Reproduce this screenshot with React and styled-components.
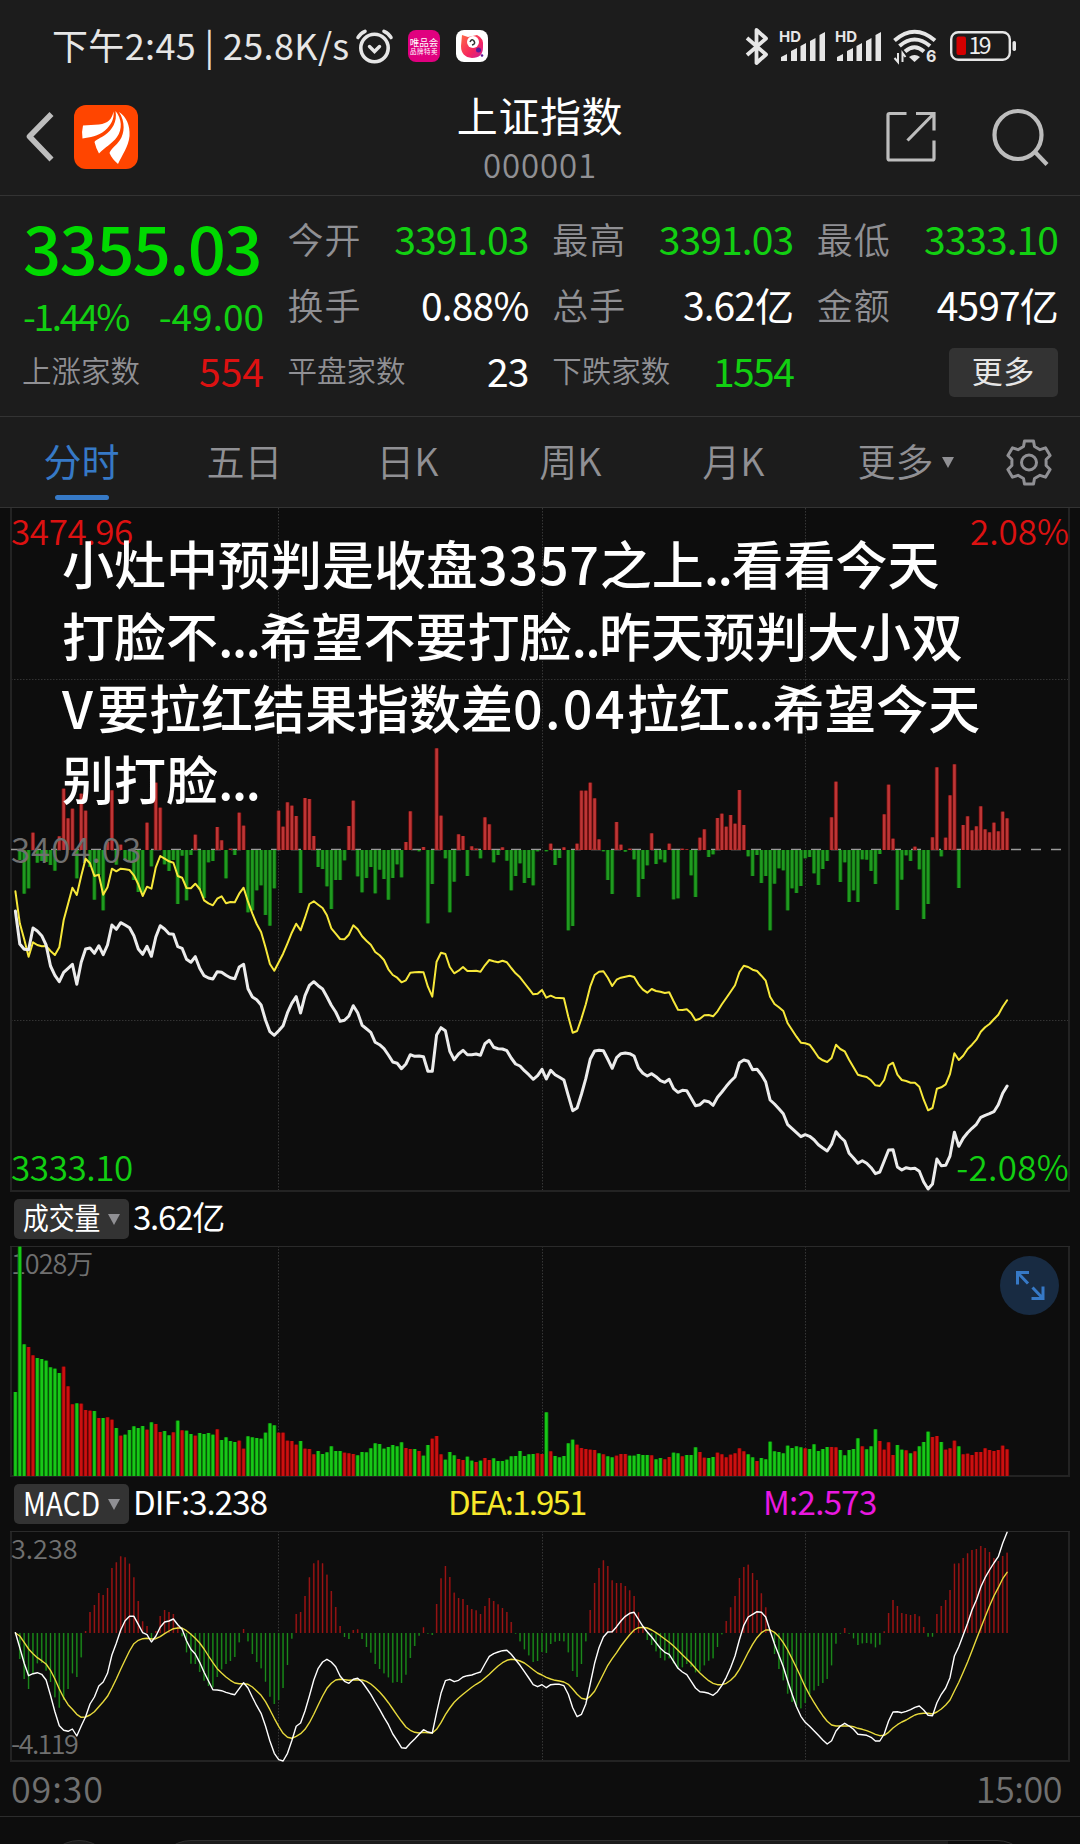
import React from "react";
import styled, { createGlobalStyle } from "styled-components";

const RED = "#dc1111";
const GREEN = "#12cf12";
const GREY = "#909094";
const DIM = "#707070";
const BLUE = "#3679c6";

// one sample per minute, 09:30 - 14:45
const STEP = 4.388;
const FIRST_X = 15.4;

const strength = [
  0, -30, -131, -115, 52, -38, -33, -36, -45, -62, 41, 184, 95, 124, -85, 169, 118, -51, -149, -75,
  -181, 24, 179, -44, 16, -30, -36, -90, -126, -129, 82, -49, 202, 127, -43, -63, -30, -162, -17, -151,
  -15, 46, -119, -144, -37, -33, 69, 29, -85, 4, -15, 112, 73, -187, -181, -121, -106, -195, -227, -115,
  118, 70, 143, 133, 102, -129, 156, 153, 42, -51, -57, -109, -177, -90, -90, -31, 72, 148, -79, -127,
  -84, -51, -130, -59, -87, -149, -84, -43, -82, 24, 116, 0, -4, 9, -220, -102, 305, 103, -25, -187,
  -95, 47, 42, -78, 11, 4, -25, 98, 77, -37, -15, 8, -32, -121, -78, -40, -99, -84, -106, -4,
  0, -4, 19, -45, -24, 8, -241, -228, 19, 178, 178, 202, 155, 32, -4, -90, -132, 84, 16, -5,
  4, -28, -141, -87, -46, 50, -42, -28, -37, 19, -148, -145, 4, 2, -76, -141, 37, 62, -21, -13,
  96, 109, 70, 105, 79, 180, 75, -19, -78, -15, -99, -78, -241, -101, -55, -61, -181, -115, -129, -108,
  -25, -21, -70, -105, -57, -33, 98, 205, -96, -37, -156, -121, -156, -28, -29, -63, -102, -12, 107, 196,
  34, -180, -89, -16, -33, 10, -58, -207, -162, 38, 248, -19, 37, 164, 257, -114, 75, 101, 59, 71,
  131, 62, 53, 82, 56, 115, 95,
];

const price = [
  543, 642, 658, 659, 594, 603, 617, 645, 708, 736, 755, 727, 715, 703, 763, 697, 657, 654, 670, 647,
  674, 645, 585, 598, 578, 585, 593, 617, 657, 673, 649, 679, 621, 587, 597, 611, 613, 650, 655, 688,
  697, 680, 715, 737, 744, 747, 725, 727, 736, 743, 746, 711, 703, 776, 801, 809, 825, 870, 905, 916,
  902, 887, 848, 820, 800, 849, 797, 766, 755, 767, 777, 800, 826, 846, 874, 871, 858, 827, 848, 886,
  896, 907, 937, 944, 956, 975, 996, 1000, 1016, 1002, 974, 979, 978, 980, 1024, 1024, 915, 893, 902, 964,
  989, 972, 961, 974, 974, 972, 976, 941, 931, 952, 956, 957, 962, 984, 1002, 1008, 1022, 1034, 1048, 1037,
  1018, 1047, 1021, 1034, 1042, 1050, 1097, 1142, 1134, 1092, 1046, 988, 963, 961, 962, 988, 1015, 983, 971, 969,
  971, 978, 1014, 1030, 1038, 1031, 1040, 1052, 1057, 1048, 1076, 1087, 1081, 1082, 1105, 1127, 1124, 1112, 1115, 1126,
  1102, 1086, 1069, 1054, 1041, 998, 990, 994, 1019, 1018, 1034, 1056, 1110, 1122, 1136, 1151, 1184, 1196, 1208, 1220,
  1214, 1219, 1229, 1244, 1254, 1263, 1243, 1205, 1221, 1233, 1270, 1284, 1300, 1292, 1300, 1313, 1331, 1326, 1293, 1260,
  1259, 1311, 1320, 1313, 1316, 1315, 1324, 1356, 1377, 1362, 1287, 1307, 1306, 1278, 1207, 1249, 1225, 1208, 1195, 1183,
  1162, 1156, 1151, 1145, 1124, 1090, 1068,
];

const average = [
  484, 580, 628, 680, 637, 645, 649, 648, 663, 675, 652, 570, 521, 473, 495, 438, 386, 400, 438, 434,
  494, 472, 416, 424, 416, 418, 420, 436, 463, 498, 470, 476, 412, 378, 386, 394, 398, 438, 443, 474,
  475, 461, 477, 511, 520, 526, 506, 499, 520, 516, 517, 491, 473, 515, 551, 582, 606, 652, 702, 722,
  697, 671, 640, 608, 581, 601, 563, 522, 514, 524, 534, 556, 595, 611, 627, 628, 614, 586, 598, 619,
  632, 644, 666, 676, 690, 718, 735, 743, 757, 751, 728, 727, 726, 727, 770, 800, 695, 668, 672, 711,
  730, 722, 711, 723, 723, 722, 725, 706, 690, 694, 697, 692, 697, 714, 730, 742, 759, 776, 793, 791,
  780, 803, 797, 803, 804, 805, 860, 908, 903, 865, 823, 770, 735, 725, 724, 743, 768, 749, 743, 740,
  737, 741, 763, 779, 788, 777, 783, 785, 789, 787, 814, 839, 840, 838, 850, 871, 866, 856, 855, 859,
  844, 823, 804, 785, 766, 727, 707, 711, 719, 723, 737, 752, 800, 822, 832, 843, 880, 900, 920, 938,
  940, 944, 962, 982, 991, 996, 984, 944, 957, 964, 989, 1012, 1034, 1038, 1041, 1051, 1066, 1068, 1050, 1006,
  998, 1034, 1050, 1053, 1058, 1058, 1070, 1109, 1141, 1134, 1076, 1072, 1063, 1032, 970, 990, 977, 957, 944, 929,
  905, 892, 882, 868, 854, 830, 811,
];

// sign carries the direction of the minute, not of the bar
const volume = [
  -252, -688, -395, 387, 362, -354, -351, -346, -326, -322, -309, 328, 269, 215, -218, 217, 198, 196, -195, 174,
  -174, 176, 169, -144, 121, -124, -138, -149, -144, -150, 139, -161, 156, 132, -135, -122, 131, -166, 137, -136,
  -126, 121, -129, -126, -129, -124, 140, -108, -116, -105, -102, 106, 82, -119, -116, -114, -112, -130, -158, -152,
  130, 130, 106, 105, 94, -105, 82, 81, 65, -75, -66, -71, -89, -75, -75, 70, 68, 66, -62, -72,
  -71, -83, -98, -96, -82, -87, -93, -89, -101, 84, 81, -81, 75, -61, -93, 112, 120, 65, -49, -72,
  -62, 51, 48, -58, -46, 42, -46, 54, 48, -53, -45, -45, -49, -59, -60, -75, -60, -65, -66, 68,
  66, -191, 74, -60, -56, -60, -98, -109, 94, 84, 81, 79, 78, -68, 65, -59, -56, 61, 66, 66,
  -61, -61, -66, -63, -63, 62, -50, -54, 50, 57, -70, -68, 59, -63, -63, -86, 72, 55, -54, -57,
  70, 65, 56, 64, 68, 83, 74, -65, -56, 45, -54, -50, -103, -74, -72, -68, -91, -84, -89, -86,
  83, -81, -95, -75, -81, -87, 87, 86, -78, -62, -78, -81, -113, 89, -80, -89, -140, 105, 79, 101,
  63, -93, -79, 77, -68, 74, -89, -102, -133, 117, 120, -102, 79, 83, 106, -89, 65, 67, 63, 72,
  72, 83, 78, 75, 78, 91, 80,
];

const macd = [
  0, -78, -138, -168, -121, -91, -90, -113, -147, -193, -224, -201, -168, -121, -132, -73, 6, 63, 84, 120,
  114, 135, 195, 212, 230, 227, 208, 167, 96, 35, 21, -18, 6, 51, 69, 63, 57, 20, -10, -58,
  -92, -93, -117, -143, -159, -163, -132, -109, -93, -84, -72, -28, 12, -25, -63, -87, -106, -146, -191, -213,
  -201, -165, -96, -17, 57, 63, 111, 167, 209, 218, 209, 175, 126, 78, 21, -12, -18, 9, 11, -18,
  -42, -59, -93, -108, -121, -133, -149, -147, -150, -125, -75, -39, -8, 17, -2, -6, 87, 164, 201, 168,
  121, 105, 102, 84, 72, 68, 57, 81, 105, 96, 86, 75, 63, 33, -2, -25, -49, -67, -87, -84,
  -57, -60, -33, -26, -24, -25, -58, -114, -132, -93, -25, 69, 150, 195, 218, 201, 158, 150, 150, 141,
  128, 111, 62, 19, -21, -36, -55, -75, -82, -76, -91, -107, -103, -93, -101, -118, -115, -97, -83, -76,
  -42, -4, 36, 77, 111, 165, 198, 205, 180, 159, 119, 77, 12, -63, -108, -142, -182, -207, -222, -226,
  -210, -191, -172, -159, -150, -138, -97, -32, -2, 15, -2, -16, -36, -31, -30, -32, -43, -35, 5, 60,
  99, 81, 60, 57, 54, 57, 50, 18, -11, -11, 57, 81, 99, 129, 208, 209, 225, 239, 249, 252,
  261, 255, 243, 225, 216, 231, 241,
];

const dif = [
  458, 503, 550, 587, 581, 578, 583, 600, 646, 695, 737, 751, 754, 747, 768, 738, 710, 672, 651, 618,
  606, 580, 525, 490, 450, 422, 409, 409, 433, 458, 464, 486, 469, 442, 426, 423, 417, 434, 448, 482,
  508, 522, 547, 577, 603, 629, 630, 632, 637, 641, 644, 626, 608, 624, 652, 677, 700, 738, 783, 820,
  839, 843, 820, 782, 739, 729, 693, 648, 600, 565, 546, 538, 546, 560, 588, 604, 610, 598, 595, 606,
  624, 643, 666, 688, 712, 734, 762, 782, 803, 805, 790, 777, 763, 749, 756, 759, 698, 640, 602, 598,
  605, 601, 591, 587, 585, 580, 576, 552, 529, 521, 516, 512, 511, 523, 539, 556, 575, 594, 614, 620,
  614, 623, 614, 613, 613, 617, 643, 683, 710, 703, 672, 612, 550, 503, 471, 456, 455, 440, 423, 409,
  400, 397, 418, 439, 456, 471, 488, 505, 517, 523, 544, 565, 576, 584, 604, 624, 635, 637, 640, 646,
  635, 616, 592, 563, 528, 479, 436, 411, 403, 395, 397, 411, 452, 492, 526, 560, 603, 643, 680, 709,
  727, 739, 752, 766, 780, 792, 782, 753, 738, 730, 738, 748, 763, 764, 766, 772, 783, 783, 762, 723,
  696, 695, 698, 694, 689, 682, 678, 690, 706, 707, 668, 643, 624, 593, 528, 500, 465, 430, 390, 360,
  321, 293, 270, 249, 230, 190, 157,
];

const dea = [
  459, 468, 487, 507, 521, 533, 542, 552, 571, 597, 627, 653, 674, 688, 703, 712, 711, 705, 695, 680,
  665, 649, 624, 597, 568, 540, 513, 491, 481, 476, 475, 477, 476, 470, 461, 453, 446, 444, 444, 452,
  463, 475, 489, 507, 528, 548, 566, 579, 591, 601, 609, 611, 611, 613, 621, 633, 646, 665, 689, 715,
  739, 760, 772, 775, 769, 761, 748, 728, 703, 675, 648, 625, 610, 600, 598, 599, 601, 600, 600, 600,
  604, 612, 623, 636, 651, 668, 687, 706, 724, 741, 751, 757, 759, 757, 758, 759, 748, 728, 704, 684,
  667, 654, 643, 632, 622, 613, 605, 594, 583, 570, 558, 548, 541, 538, 539, 543, 549, 559, 569, 579,
  585, 592, 597, 601, 603, 606, 613, 627, 643, 655, 658, 649, 634, 608, 582, 556, 536, 518, 498, 481,
  464, 450, 443, 442, 444, 450, 458, 467, 477, 487, 498, 511, 524, 537, 550, 565, 579, 591, 602, 610,
  614, 614, 610, 601, 588, 568, 543, 517, 493, 473, 458, 450, 450, 457, 470, 488, 510, 536, 563, 592,
  620, 645, 667, 688, 707, 724, 735, 738, 738, 738, 738, 740, 745, 748, 752, 757, 763, 767, 766, 757,
  744, 734, 726, 720, 712, 705, 701, 700, 700, 702, 696, 687, 675, 660, 633, 607, 577, 546, 512, 478,
  444, 411, 378, 348, 323, 296, 277,
];

const GlobalStyle = createGlobalStyle`
  * {
    box-sizing: border-box;
  }
  body {
    margin: 0;
    background: #0d0d0d;
    font-family: "Noto Sans CJK SC", "Noto Sans", sans-serif;
  }
  svg {
    display: block;
    flex: none;
    overflow: visible;
  }
`;

const Page = styled.div`
  width: 1080px;
  height: 1844px;
  overflow: hidden;
  background: #0d0d0d;
  color: #fff;
`;

const Text = styled.span`
  font-size: ${({ $size }) => $size}px;
  font-weight: ${({ $weight }) => $weight || 400};
  letter-spacing: ${({ $ls }) => $ls || 0}px;
  color: ${({ $color }) => $color || "#fff"};
  line-height: 1;
  white-space: nowrap;
`;

const StatusBar = styled.div`
  height: 90px;
  padding: 2px 63px 0 52px;
  display: flex;
  align-items: center;
  background: #1c1c1c;
`;

const StatusText = styled(Text)`
  width: 304px;
  padding-bottom: 4px;
`;

const AppBadge = styled.div`
  width: 32px;
  height: 32px;
  margin-left: ${({ $gap }) => $gap}px;
  border-radius: 8px;
  background: ${({ $bg }) => $bg};
  display: flex;
  flex-direction: column;
  align-items: center;
  justify-content: center;
`;

const StatusIcons = styled.div`
  margin-left: auto;
  display: flex;
  align-items: center;
`;

const Header = styled.header`
  height: 106px;
  padding: 0 31px 0 26px;
  display: grid;
  grid-template-columns: 1fr auto 1fr;
  background: #1c1c1c;
  border-bottom: 1px solid #333;
`;

const HeaderSide = styled.div`
  display: flex;
  align-items: flex-start;
  padding-top: ${({ $top }) => $top}px;
  justify-content: ${({ $end }) => ($end ? "flex-end" : "flex-start")};
  gap: ${({ $gap }) => $gap}px;
`;

const Titles = styled.div`
  display: flex;
  flex-direction: column;
  align-items: center;
  padding: 4px 0 0 5px;
  gap: 13px;
`;

const Quote = styled.section`
  height: 221px;
  padding: 9px 22px 0 23px;
  display: grid;
  grid-template-columns: 241px 240px 240px 240px;
  grid-template-rows: repeat(3, 66px);
  column-gap: 24.6px;
  background: #1c1c1c;
  border-bottom: 1px solid #333;
`;

const LastPrice = styled.div`
  grid-row: span 2;
  display: flex;
  flex-direction: column;
  padding-top: 7px;
  gap: 18px;
`;

const Cell = styled.div`
  display: flex;
  align-items: center;
  justify-content: space-between;
`;

const CellLabel = styled(Text)`
  margin-left: -1px;
`;

const MoreButton = styled.button`
  width: 109px;
  height: 49px;
  margin: 4px 0 0 auto;
  padding: 0 0 3px;
  border: 0;
  border-radius: 5px;
  background: #333;
  font-family: inherit;
`;

const Tabs = styled.nav`
  height: 91px;
  display: grid;
  grid-template-columns: repeat(6, 163px) 1fr;
  background: #1c1c1c;
  border-bottom: 1px solid #333;
`;

const Tab = styled.div`
  display: flex;
  flex-direction: column;
  align-items: center;
  padding-top: 23px;
`;

const TabLabel = styled.div`
  display: flex;
  align-items: center;
  height: 39px;
  padding-left: ${({ $shift }) => ($shift ? 18 : 0)}px;
`;

const TabLine = styled.div`
  width: 54px;
  height: 5px;
  margin-top: 16px;
  border-radius: 3px;
  background: ${BLUE};
`;

const GearSlot = styled.div`
  padding: 22px 0 0 28px;
`;

const Arrow = styled.div`
  border: solid transparent;
  border-width: 11px 6.5px 0;
  border-top-color: #909094;
  margin-left: ${({ $gap }) => $gap}px;
  margin-top: ${({ $drop }) => $drop || 0}px;
`;

const Panel = styled.div`
  position: relative;
  height: ${({ $height }) => $height}px;
`;

const AxisLabel = styled(Text)`
  position: absolute;
  top: ${({ $top }) => $top}px;
  ${({ $right }) => ($right ? "right: 11px;" : "left: 11px;")}
`;

const Note = styled.p`
  position: absolute;
  top: 19px;
  left: 62px;
  margin: 0;
  font-size: 52px;
  font-weight: 500;
  line-height: 71.8px;
  white-space: nowrap;
`;

const Tracked = styled.span`
  letter-spacing: ${({ $ls }) => $ls}px;
`;

const IndicatorRow = styled.div`
  height: ${({ $height }) => $height}px;
  padding-left: 14px;
  display: flex;
  align-items: center;
`;

const IndicatorButton = styled.div`
  flex: none;
  width: 115px;
  height: 40px;
  padding-left: 9px;
  margin-right: 4px;
  border-radius: 5px;
  background: #333;
  display: flex;
  align-items: center;
`;

const Squeezed = styled.div`
  width: 77px;
  height: 36px;
  transform-origin: 0 50%;
  transform: scaleX(${({ $x }) => $x});
`;

const Legend = styled.div`
  display: grid;
  grid-template-columns: 315px 315px auto;
  padding-bottom: 5px;
`;

const ExpandButton = styled.div`
  position: absolute;
  top: 10px;
  right: 21px;
  width: 59px;
  height: 59px;
  border-radius: 50%;
  background: #182b42;
  display: flex;
  align-items: center;
  justify-content: center;
`;

const TimeAxis = styled.div`
  height: 55px;
  padding: 7px 18px 0 11px;
  display: flex;
  justify-content: space-between;
  border-bottom: 1px solid #2c2c2c;
`;

const BottomBar = styled.div`
  height: 27px;
  padding: 23px 0 0 44px;
  display: flex;
  overflow: hidden;
`;

const RoundButton = styled.div`
  flex: none;
  width: 70px;
  height: 70px;
  border: 1px solid #303030;
  border-radius: 50%;
  background: #1c1c1c;
`;

const InputPill = styled.div`
  flex: none;
  width: 876px;
  height: 70px;
  margin-left: 42px;
  border: 1px solid #303030;
  border-radius: 35px;
  background: linear-gradient(90deg, #1c1c1c 791px, #0d0d0d 791px);
`;

// drawn above the axis labels
const TopLayer = styled.svg`
  position: absolute;
  top: 0;
  left: 0;
`;

const BarSeries = ({ data, base, signed, core, edge, red, green }) =>
  data.map((v, i) => {
    const x = FIRST_X + i * STEP;
    const h = Math.abs(v) / 3;
    const y = signed && v < 0 ? base : base - h;
    const [main, dark] = v < 0 ? green : red;
    return (
      <g key={i}>
        <rect x={x - edge / 2} y={y} width={edge} height={h} fill={dark} />
        <rect x={x - core / 2} y={y} width={core} height={h} fill={main} />
      </g>
    );
  });

const Line = ({ data, shift, color, width }) => (
  <polyline
    points={data.map((v, i) => `${(FIRST_X + i * STEP).toFixed(1)},${(shift + v / 3).toFixed(1)}`).join(" ")}
    fill="none"
    stroke={color}
    strokeWidth={width}
    strokeLinejoin="round"
    strokeLinecap="round"
  />
);

const Frame = ({ bottom, top }) => (
  <g>
    {[278.5, 542.5, 805.5].map((x) => (
      <path key={x} d={`M${x} 0V${bottom}`} stroke="#363636" strokeDasharray="1.5 1.5" />
    ))}
    <path d={`M11 0V${bottom}M1069 0V${bottom}M10 ${bottom}H1070`} stroke="#232323" strokeWidth="2" />
    {top && <path d="M10 .5H1070" stroke="#2a2a2a" />}
  </g>
);

const AlarmIcon = () => (
  <svg width="37" height="35" viewBox="0 0 37 35" fill="none" stroke="#e6e6e6" strokeWidth="3.6" strokeLinecap="round">
    <circle cx="18.5" cy="19" r="13.7" />
    <path d="M2 8.5Q4 4.5 9 2.3M35 8.5Q33 4.5 28 2.3" />
    <path d="M13.5 17.5l5 5 5-5" strokeWidth="3.4" />
  </svg>
);

const BluetoothIcon = () => (
  <svg width="24" height="37" viewBox="0 0 24 37" fill="none" stroke="#e6e6e6" strokeWidth="3.8" strokeLinejoin="round">
    <path d="M2 10L21 26.5 11.5 35V2L21 10.5 2 27" />
  </svg>
);

const SignalIcon = () => (
  <svg width="48" height="32" viewBox="0 0 48 32" fill="#e6e6e6">
    <text x="0" y="12" fontSize="15" fontWeight="700" fontFamily="Inter, sans-serif" textLength="22">
      HD
    </text>
    <path d="M2 31v-4l6-3v7zM12 31V21l6-3v13zM21.500 31V16l5.500-3v18zM31 31V11l5.500-3v23zM40.500 31V5l5.500-3v29z" />
  </svg>
);

const WifiIcon = () => (
  <svg width="44" height="34" viewBox="0 0 44 34" fill="none" stroke="#e6e6e6" strokeWidth="4">
    <path d="M1.5 11.5Q21.500-6 42 11.5M6.500 17Q21.500 4 37 17M12 22.500Q21.500 14 31 22.500" />
    <path d="M16 28q5.500-4 11 0l-5.500 5z" fill="#e6e6e6" stroke="none" />
    <path d="M5 24v9l-3.500-4M9.500 33v-9l3 4" strokeWidth="2" />
    <text x="33" y="33" fontSize="16" fontWeight="700" fontFamily="Inter, sans-serif" fill="#e6e6e6" stroke="none">
      6
    </text>
  </svg>
);

const BatteryIcon = () => (
  <svg width="67" height="30" viewBox="0 0 67 30">
    <rect x="1.2" y="1.2" width="58.6" height="27.6" rx="7" fill="none" stroke="#e6e6e6" strokeWidth="2.4" />
    <rect x="6.5" y="5.500" width="9.500" height="18.500" rx="2" fill="#d40000" />
    <rect x="62.500" y="10" width="3.500" height="10" rx="1.700" fill="#e6e6e6" />
    <text x="18.500" y="23" fontSize="23" fill="#eee" textLength="23">
      19
    </text>
  </svg>
);

const BackIcon = () => (
  <svg width="27" height="58" viewBox="0 -7 27 58" fill="none" stroke="#bdbdbd" strokeWidth="5.6">
    <path d="M25.500 2L3.500 24.500 25.500 47.500" strokeLinejoin="round" />
  </svg>
);

const LogoIcon = () => (
  <svg width="64" height="64" viewBox="0 0 64 64">
    <rect width="64" height="64" rx="12" fill="#ff4500" />
    <g fill="#fff">
      <path d="M39.500 6.500C38 14 34 18.500 25 19.500L9 20.500Q7.500 26 8.500 33.500C16 32 24 31.500 31 25.500C37 20 40.500 14 39.500 6.500z" />
      <path d="M41.500 6C43.500 17 38 25 31 30C27 33 22 34.500 20.500 37Q22 43.500 25 48.500C31 42 38 39 43 32C48.500 24 48 14 41.500 6z" />
      <path d="M45 7C51.500 17 50.500 28 46 35C42 41 37 43.500 35.500 48Q38 54 44 59C48 50 54.500 42 55.500 31C56 20 52.500 12 45 7z" />
    </g>
  </svg>
);

const ShareIcon = () => (
  <svg width="50" height="55" viewBox="0 -2 50 55" fill="none" stroke="#bdbdbd" strokeWidth="3.2">
    <path d="M20.500 2.500H3.500Q2 2.500 2 4V47.500Q2 49 3.500 49H46.500Q48 49 48 47.500V29.500M30 2.500H48V19.500M48 2.500L21.500 29.500" />
  </svg>
);

const SearchIcon = () => (
  <svg width="57" height="58" viewBox="0 0 57 58" fill="none" stroke="#bdbdbd" strokeWidth="4.2">
    <ellipse cx="26" cy="26" rx="23.500" ry="24" />
    <path d="M43 43L55 55.500" />
  </svg>
);

const GearIcon = () => (
  <svg width="46" height="47" viewBox="0 0 46 47" fill="none" stroke={GREY} strokeWidth="3" strokeLinejoin="round">
    <path d="M18.500 2h9l1 5.500 5.500 3.200 5.500-1.900 4.600 7.700-4 4v6l4 4-4.600 7.700-5.500-1.900-5.500 3.200-1 5.500h-9l-1-5.500-5.500-3.200-5.500 1.900L1.900 30.500l4-4v-6l-4-4L6.500 8.800l5.500 1.900 5.500-3.200z" />
    <circle cx="23" cy="23.500" r="7.500" />
  </svg>
);

const ExpandIcon = () => (
  <svg width="30" height="31" viewBox="0 0 30 31" fill="none" stroke={BLUE} strokeWidth="3">
    <path d="M14 2.500H2.500V14.500M2.500 2.500L13 13.500M16.500 28.500H28V16.500M28 28.500L17.500 17.500" />
  </svg>
);

const BirdIcon = () => (
  <svg width="32" height="32" viewBox="0 0 32 32">
    <defs>
      <linearGradient id="pink" x1="0" y1="0" x2="1" y2="1">
        <stop offset="0" stopColor="#ff6a45" />
        <stop offset=".6" stopColor="#f5255f" />
        <stop offset="1" stopColor="#c81d9a" />
      </linearGradient>
    </defs>
    <path d="M6 5l6 2 9-2q7 3 6 12q0 11-11 11Q5 27 5 16z" fill="url(#pink)" />
    <circle cx="17" cy="12" r="6" fill="#fff" />
    <path d="M14 12q2-4 4-1t-2 4" stroke="#333" strokeWidth="1.500" fill="none" />
    <circle cx="22.500" cy="20" r="2.500" fill="#5b1a96" />
    <circle cx="26" cy="25.500" r="1.300" fill="#5b1a96" />
  </svg>
);

const stats = [
  { label: "今开", value: "3391.03", color: GREEN, ls: -0.9 },
  { label: "最高", value: "3391.03", color: GREEN, ls: -0.9 },
  { label: "最低", value: "3333.10", color: GREEN, ls: -1 },
  { label: "换手", value: "0.88%", color: "#fff", ls: -0.8 },
  { label: "总手", value: "3.62亿", color: "#fff", ls: -0.9 },
  { label: "金额", value: "4597亿", color: "#fff", ls: -0.9 },
];

const counts = [
  { label: "上涨家数", value: "554", color: RED, ls: 0 },
  { label: "平盘家数", value: "23", color: "#fff", ls: -0.8 },
  { label: "下跌家数", value: "1554", color: GREEN, ls: -1.6 },
];

const tabs = ["分时", "五日", "日K", "周K", "月K", "更多"];

const App = () => (
  <Page>
    <GlobalStyle />
    <StatusBar>
      <StatusText $size={36} $color="#e6e6e6" $ls={0.35}>
        下午2:45 | 25.8K/s
      </StatusText>
      <AlarmIcon />
      <AppBadge $gap={15} $bg="#e0007f">
        <Text $size={9.5}>唯品会</Text>
        <Text $size={6.5} $ls={0.5}>品牌特卖</Text>
      </AppBadge>
      <AppBadge $gap={16} $bg="#fff">
        <BirdIcon />
      </AppBadge>
      <StatusIcons>
        <BluetoothIcon />
        <svg width="10" height="1" />
        <SignalIcon />
        <svg width="8" height="1" />
        <SignalIcon />
        <svg width="10" height="1" />
        <WifiIcon />
        <svg width="13" height="1" />
        <BatteryIcon />
      </StatusIcons>
    </StatusBar>

    <Header>
      <HeaderSide $top={15} $gap={21}>
        <BackIcon />
        <LogoIcon />
      </HeaderSide>
      <Titles>
        <Text $size={41} $ls={0.6}>上证指数</Text>
        <Text $size={33} $color={GREY} $weight={350} $ls={0.9}>000001</Text>
      </Titles>
      <HeaderSide $end $top={19} $gap={56}>
        <ShareIcon />
        <SearchIcon />
      </HeaderSide>
    </Header>

    <Quote>
      <LastPrice>
        <Text $size={67} $color="#00d900" $weight={500} $ls={-1.6}>3355.03</Text>
        <Cell>
          <Text $size={37} $color={GREEN} $ls={-2.3}>-1.44%</Text>
          <Text $size={37} $color={GREEN}>-49.00</Text>
        </Cell>
      </LastPrice>
      {stats.map(({ label, value, color, ls }) => (
        <Cell key={label}>
          <CellLabel $size={36} $color={GREY} $weight={350} $ls={1}>{label}</CellLabel>
          <Text $size={39} $color={color} $ls={ls}>{value}</Text>
        </Cell>
      ))}
      {counts.map(({ label, value, color, ls }) => (
        <Cell key={label}>
          <CellLabel $size={29.5} $color={GREY} $weight={350}>{label}</CellLabel>
          <Text $size={39} $color={color} $ls={ls}>{value}</Text>
        </Cell>
      ))}
      <Cell>
        <MoreButton>
          <Text $size={31} $ls={0.5} $color="#e6e6e6">更多</Text>
        </MoreButton>
      </Cell>
    </Quote>

    <Tabs>
      {tabs.map((name, i) => (
        <Tab key={name}>
          <TabLabel $shift={name === "更多"}>
            <Text $size={38} $color={i ? GREY : BLUE} $weight={i ? 350 : 400}>{name}</Text>
            {name === "更多" && <Arrow $gap={8} $drop={5} />}
          </TabLabel>
          {i === 0 && <TabLine />}
        </Tab>
      ))}
      <GearSlot>
        <GearIcon />
      </GearSlot>
    </Tabs>

    <Panel $height={684}>
      <svg width="1080" height="684">
        <path d="M11 171.5H1069M11 512.5H1069" stroke="#333" strokeDasharray="1.5 1.5" />
        <Frame bottom={683} />
        <path d="M11 341.500H1069" stroke="#9a9a9a" strokeWidth="1.500" strokeDasharray="10 10" />
        <BarSeries
          data={strength}
          base={342}
          signed
          core={2.6}
          edge={4.2}
          red={["#be3636", "#6e0d0d"]}
          green={["#209a20", "#0b5a0b"]}
        />
      </svg>
      <AxisLabel $top={4} $size={35} $color={RED} $weight={350} $ls={-0.4}>3474.96</AxisLabel>
      <AxisLabel $top={4} $right $size={35} $color={RED} $weight={350}>2.08%</AxisLabel>
      <AxisLabel $top={322} $size={35} $color={DIM} $weight={350} $ls={0.9}>3404.03</AxisLabel>
      <AxisLabel $top={640} $size={35} $color={GREEN} $weight={350} $ls={-0.4}>3333.10</AxisLabel>
      <AxisLabel $top={640} $right $size={35} $color={GREEN} $weight={350} $ls={0.3}>-2.08%</AxisLabel>
      <TopLayer width="1080" height="684">
        <Line data={average} shift={222} color="#f7e83a" width={2} />
        <Line data={price} shift={222} color="#ececec" width={3} />
      </TopLayer>
      <Note>
        小灶中预判是收盘<Tracked $ls={0.8}>3357</Tracked>之上<Tracked $ls={-1.7}>..</Tracked>看看今天
        <br />
        打脸不<Tracked $ls={-1.7}>...</Tracked>希望不要打脸<Tracked $ls={-1.7}>..</Tracked>昨天预判大小双
        <br />
        <Tracked $ls={4}>V</Tracked>要拉红结果指数差<Tracked $ls={2.4}>0.04</Tracked>拉红
        <Tracked $ls={-1.7}>...</Tracked>希望今天
        <br />
        别打脸<Tracked $ls={-1.7}>...</Tracked>
      </Note>
    </Panel>

    <IndicatorRow $height={54}>
      <IndicatorButton>
        <Squeezed $x={0.86}>
          <Text $size={30}>成交量</Text>
        </Squeezed>
        <Arrow $gap={8} />
      </IndicatorButton>
      <Legend>
        <Text $size={33} $ls={-1.2}>3.62亿</Text>
      </Legend>
    </IndicatorRow>

    <Panel $height={231}>
      <svg width="1080" height="231">
        <Frame bottom={230} top />
      </svg>
      <AxisLabel $top={3} $size={27} $color={DIM} $weight={350} $ls={-1}>1028万</AxisLabel>
      <TopLayer width="1080" height="231">
        <BarSeries
          data={volume}
          base={230}
          core={2.6}
          edge={4.2}
          red={["#cc1010", "#760505"]}
          green={["#18c818", "#087008"]}
        />
      </TopLayer>
      <ExpandButton>
        <ExpandIcon />
      </ExpandButton>
    </Panel>

    <IndicatorRow $height={54}>
      <IndicatorButton>
        <Squeezed $x={0.88}>
          <Text $size={32}>MACD</Text>
        </Squeezed>
        <Arrow $gap={8} />
      </IndicatorButton>
      <Legend>
        <Text $size={33} $ls={-0.9}>DIF:3.238</Text>
        <Text $size={33} $ls={-1.8} $color="#f7e82a">DEA:1.951</Text>
        <Text $size={33} $ls={-0.7} $color="#ea18e0">M:2.573</Text>
      </Legend>
    </IndicatorRow>

    <Panel $height={231}>
      <svg width="1080" height="231">
        <Frame bottom={230} top />
        <BarSeries
          data={macd}
          base={102}
          signed
          core={1}
          edge={1.8}
          red={["#9c1616", "#5c0c0c"]}
          green={["#1f8a1f", "#0a4f0a"]}
        />
      </svg>
      <AxisLabel $top={3} $size={27} $color={DIM} $weight={350}>3.238</AxisLabel>
      <AxisLabel $top={198} $size={27} $color={DIM} $weight={350} $ls={-1.6}>-4.119</AxisLabel>
      <TopLayer width="1080" height="231">
        <Line data={dea} shift={-51} color="#e8da3c" width={1.4} />
        <Line data={dif} shift={-51} color="#fff" width={1.4} />
      </TopLayer>
    </Panel>

    <TimeAxis>
      <Text $size={36} $color={DIM} $weight={350} $ls={0.8}>09:30</Text>
      <Text $size={36} $color={DIM} $weight={350} $ls={-0.5}>15:00</Text>
    </TimeAxis>
    <BottomBar>
      <RoundButton />
      <InputPill />
    </BottomBar>
  </Page>
);

export default App;
